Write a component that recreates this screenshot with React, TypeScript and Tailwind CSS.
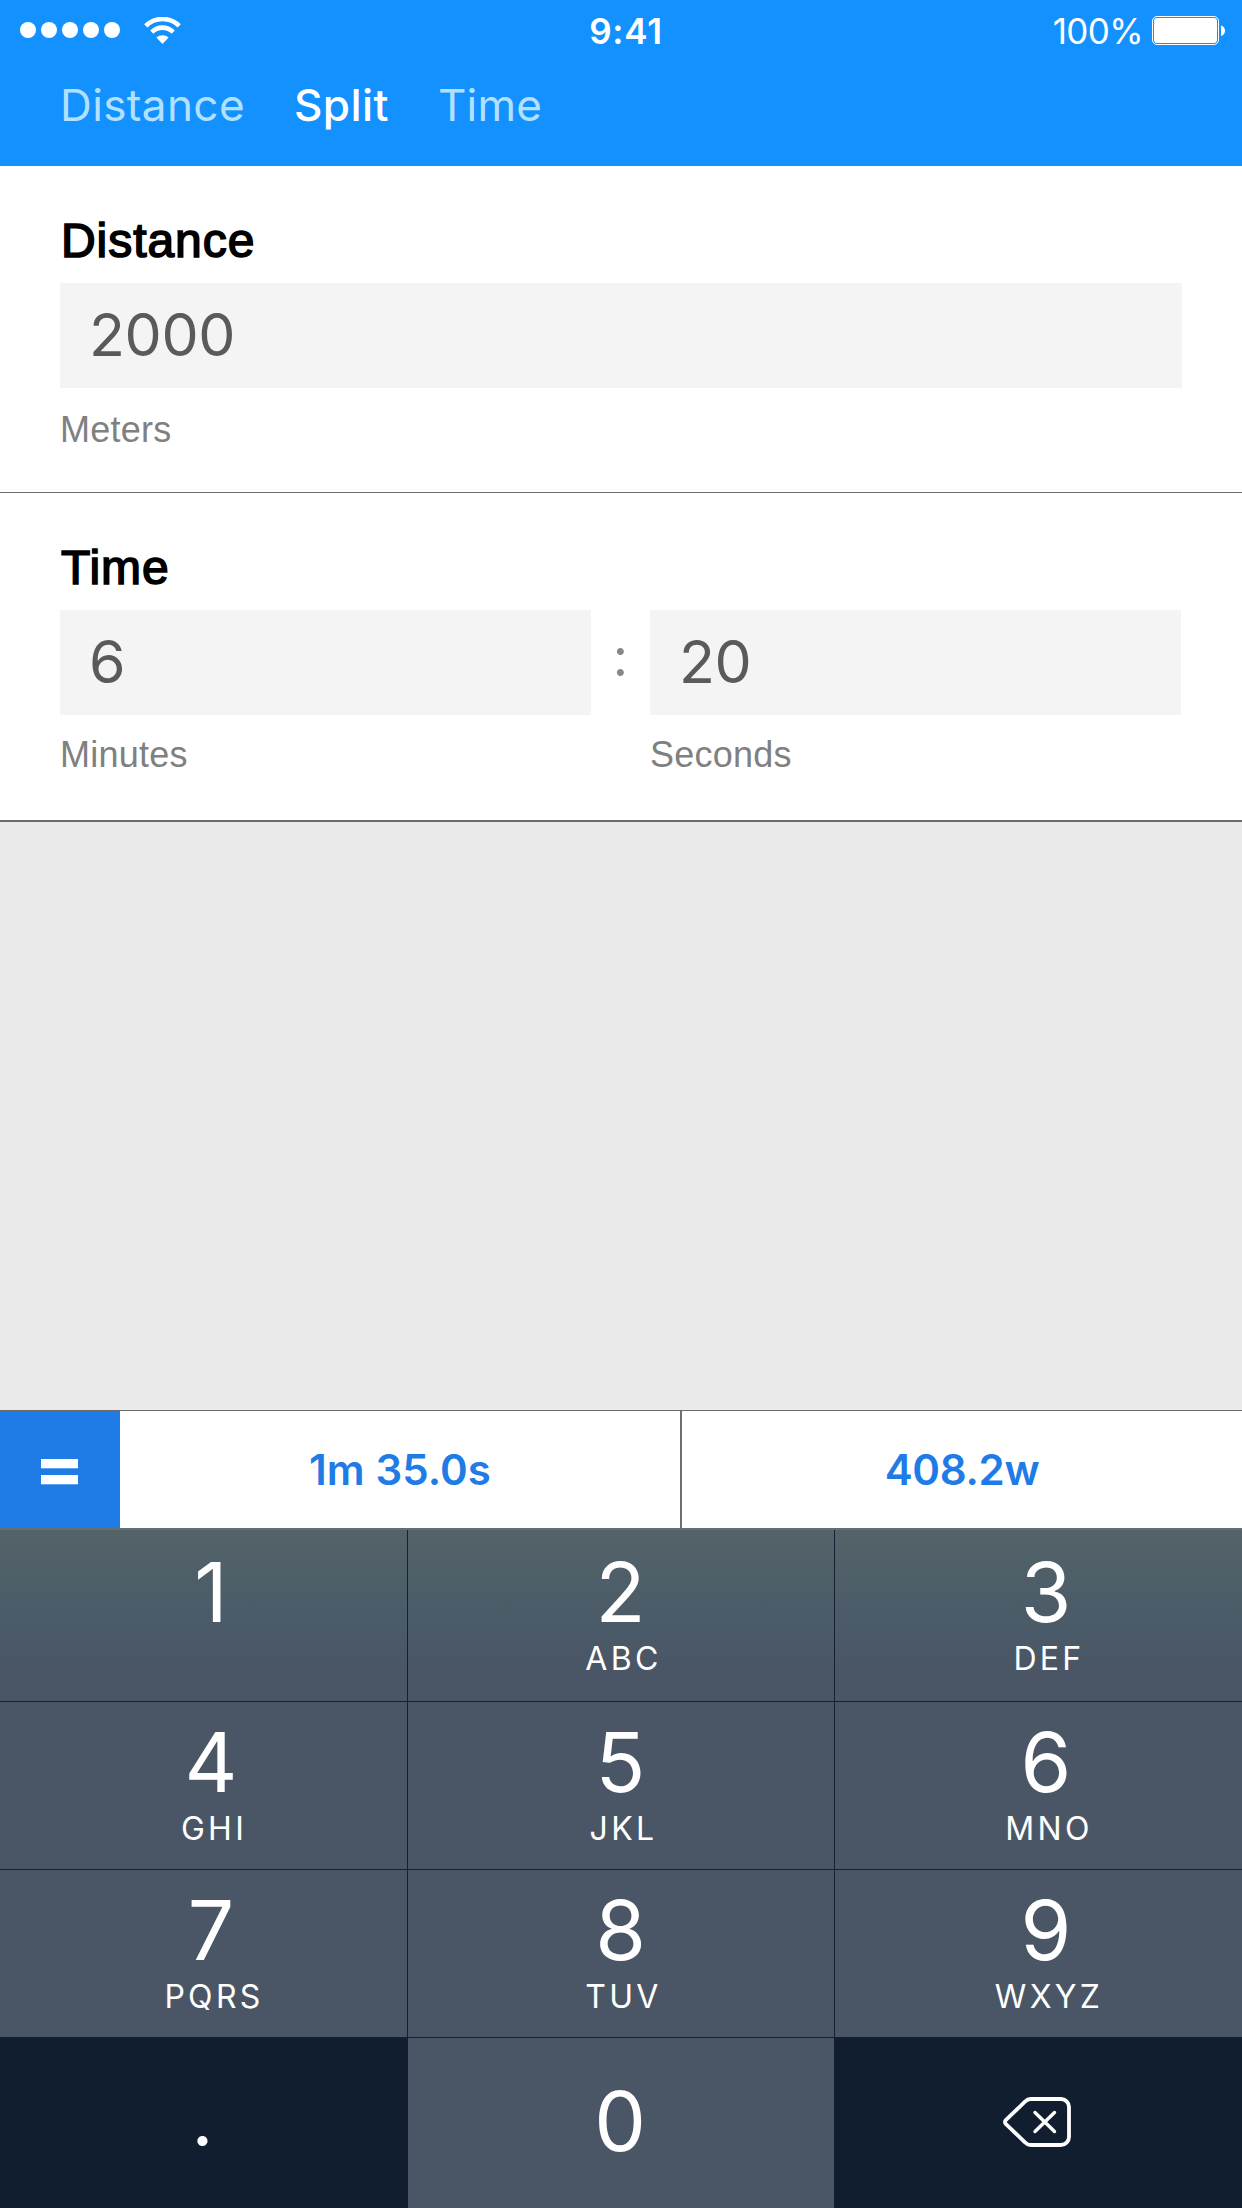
import React from "react";

type KeyDef = { digit: string; letters?: string };

const rows: KeyDef[][] = [
  [{ digit: "1" }, { digit: "2", letters: "ABC" }, { digit: "3", letters: "DEF" }],
  [
    { digit: "4", letters: "GHI" },
    { digit: "5", letters: "JKL" },
    { digit: "6", letters: "MNO" },
  ],
  [
    { digit: "7", letters: "PQRS" },
    { digit: "8", letters: "TUV" },
    { digit: "9", letters: "WXYZ" },
  ],
];

const columnClasses = ["border-r pl-[15px]", "border-r pr-px", "pl-[15px]"];

function StatusBar() {
  return (
    <div className="grid h-[60px] grid-cols-3 items-center text-white">
      <div className="flex items-center pl-5">
        <div className="flex gap-[5px]">
          {[0, 1, 2, 3, 4].map((i) => (
            <span key={i} className="size-4 rounded-full bg-white" />
          ))}
        </div>
        <svg className="ml-[24px] h-[27px] w-[37px]" viewBox="0 0 37 27" fill="none">
          <path d="M1.8 8.9a23.6 23.6 0 0 1 33.4 0" stroke="white" strokeWidth="4.6" />
          <path d="M7.8 15.1a15.1 15.1 0 0 1 21.4 0" stroke="white" strokeWidth="4.6" />
          <path d="M12.4 20.6a8.8 8.8 0 0 1 12.2 0L18.5 27z" fill="white" />
        </svg>
      </div>
      <div className="mt-[3px] pl-[10px] text-center text-[35px] leading-none font-semibold tracking-[0.8px]">
        9:41
      </div>
      <div className="flex h-[60px] items-start justify-end pr-[17px]">
        <span className="mt-[14px] text-[35px] leading-none tracking-[-0.6px]">100%</span>
        <svg className="mt-[16px] ml-[9px] h-[29px] w-[73px]" viewBox="0 0 73 29" fill="none">
          <rect x="0.5" y="0.5" width="66" height="28" rx="4.5" stroke="white" />
          <rect x="2" y="2" width="63" height="25" rx="3" fill="white" />
          <path d="M69 9.500c5.300 1.500 5.300 9 0 10.500z" fill="white" />
        </svg>
      </div>
    </div>
  );
}

function Tabs() {
  return (
    <nav className="flex pt-[23px] pl-[60px] text-[44px] leading-[44px]">
      <span className="w-[234px] tracking-[0.4px] text-[#b3e0ff]">Distance</span>
      <span className="w-[144px] font-medium tracking-[0.4px] text-white">Split</span>
      <span className="tracking-[0.2px] text-[#b3e0ff]">Time</span>
    </nav>
  );
}

function Title({ children }: { children: string }) {
  return (
    <h2 className="pl-px font-['Liberation_Sans',sans-serif] text-[48px] leading-[48px] tracking-[0.95px] text-black [-webkit-text-stroke:1.6px_black]">
      {children}
    </h2>
  );
}

function Field({ value }: { value: string }) {
  return (
    <div className="flex h-[105px] items-center bg-[#f4f4f4] pb-[3px] pl-[29px] text-[59px] leading-none tracking-[-0.4px] text-[#5a5a5a]">
      {value}
    </div>
  );
}

function Unit({ children }: { children: string }) {
  return (
    <div className="font-['Liberation_Sans',sans-serif] text-[36px] leading-[36px] tracking-[0.25px] text-[#808080]">
      {children}
    </div>
  );
}

function Backspace() {
  return (
    <svg className="h-[50px] w-[68px]" viewBox="0 0 68 50" fill="none" stroke="white" strokeLinecap="round" strokeLinejoin="round">
      <path
        d="M27.500 2H58a8 8 0 0 1 8 8v30a8 8 0 0 1-8 8H27.500q-3 0-5-2.200L3 27.200q-2-2.200 0-4.400L22.500 4.200q2-2.200 5-2.200z"
        strokeWidth="3.800"
      />
      <path d="M32 15.500l19.500 19M51.500 15.500L32 34.500" strokeWidth="3.400" />
    </svg>
  );
}

function Keypad() {
  return (
    <div className="bg-[#4a5666] bg-[linear-gradient(180deg,#546369_0px,#4b5c68_80px,#4a5666_135px)] text-white">
      {rows.map((row, r) => (
        <div
          key={r}
          className={
            r === 0
              ? "grid h-[172px] grid-cols-[408px_427px_407px] border-b border-[#152033]"
              : "grid h-[168px] grid-cols-[408px_427px_407px] border-b border-[#152033]"
          }
        >
          {row.map((k, c) => (
            <div
              key={k.digit}
              className={`flex flex-col items-center border-[#152033] ${r === 0 ? "pt-[22px]" : "pt-[20px]"} ${columnClasses[c]}`}
            >
              <span className="text-[82px] leading-none">{k.digit}</span>
              {k.letters && (
                <span className="mt-[9px] pl-1.5 text-[32px] leading-none tracking-[3.300px]">{k.letters}</span>
              )}
            </div>
          ))}
        </div>
      ))}
      <div className="grid h-[170px] grid-cols-[408px_426px_408px]">
        <div className="flex justify-center bg-[#111e30] pt-[42px] pr-[3px] text-[76px] leading-none">.</div>
        <div className="flex justify-center pt-[43px] pr-[2px] text-[82px] leading-none">0</div>
        <div className="flex justify-center bg-[#111e30] pt-[59px] pr-[2px]">
          <Backspace />
        </div>
      </div>
    </div>
  );
}

export default function App() {
  return (
    <div className="flex h-[2208px] w-[1242px] flex-col overflow-hidden bg-[#eaeaea] font-['Inter',sans-serif]">
      <header className="h-[166px] border-b border-[#6b7b8a] bg-[#1291ff]">
        <StatusBar />
        <Tabs />
      </header>
      <section className="h-[327px] border-b border-[#6b6b6b] bg-white px-[60px] pt-[51px]">
        <Title>Distance</Title>
        <div className="mt-[18px]">
          <Field value="2000" />
        </div>
        <div className="mt-[24px]">
          <Unit>Meters</Unit>
        </div>
      </section>
      <section className="h-[329px] border-b-2 border-[#6b6b6b] bg-white px-[60px] pt-[51px]">
        <Title>Time</Title>
        <div className="mt-[18px] grid grid-cols-[531px_59px_531px]">
          <div>
            <Field value="6" />
            <div className="mt-[22px]">
              <Unit>Minutes</Unit>
            </div>
          </div>
          <div className="pt-[21px] text-center text-[53px] leading-none text-[#888888]">:</div>
          <div>
            <Field value="20" />
            <div className="mt-[22px]">
              <Unit>Seconds</Unit>
            </div>
          </div>
        </div>
      </section>
      <div className="flex-1" />
      <section className="grid h-[120px] grid-cols-[120px_562px_560px] border-t border-b-2 border-t-[#6b6b6b] border-b-[#666e70] bg-white text-[42px] leading-none font-semibold text-[#1f7ce6]">
        <div className="flex items-center justify-center bg-[#1f7ce6] pr-px">
          <svg className="mt-[4px] h-[26px] w-[37px]" viewBox="0 0 37 26" fill="white">
            <rect width="37" height="9.300" />
            <rect y="16" width="37" height="9.300" />
          </svg>
        </div>
        <div className="flex items-center justify-center border-r-2 border-[#6e6e6e] pt-px tracking-[0.1px]">1m 35.0s</div>
        <div className="flex items-center justify-center pt-px tracking-[-0.3px]">408.2w</div>
      </section>
      <Keypad />
    </div>
  );
}
